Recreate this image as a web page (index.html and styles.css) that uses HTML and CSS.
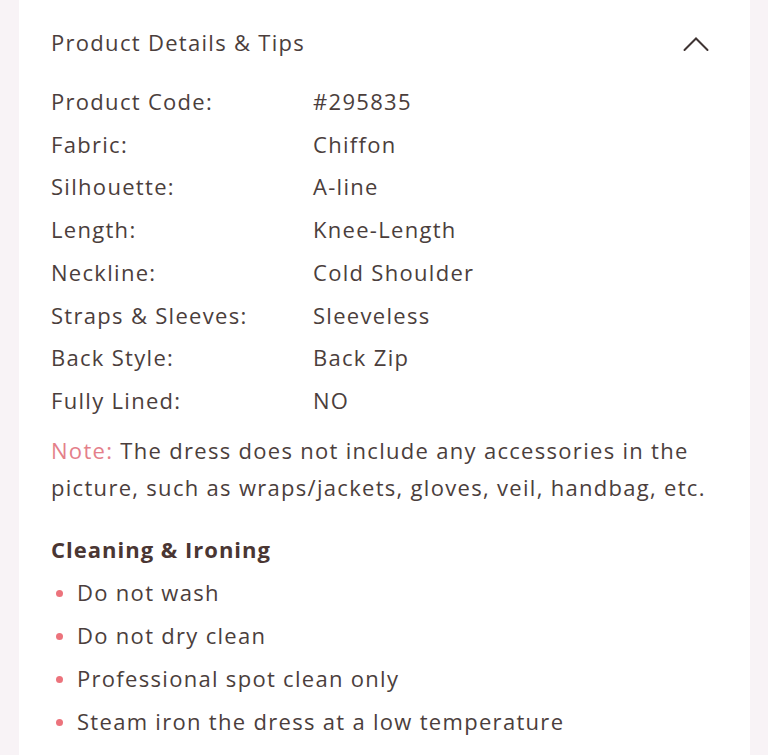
FILE: index.html
```html
<!DOCTYPE html>
<html lang="en">
<head>
<meta charset="utf-8">
<title>Product Details &amp; Tips</title>
<link rel="stylesheet" href="styles.css">
</head>
<body>
<main class="card">
  <div class="header">
    <h2 class="title">Product Details &amp; Tips</h2>
    <svg class="chevron" width="26" height="16" viewBox="0 0 26 16" aria-hidden="true">
      <polyline points="1.5,14 13,2.5 24.5,14" fill="none" stroke="#3f3433" stroke-width="2" stroke-linecap="round" stroke-linejoin="miter"/>
    </svg>
  </div>
  <dl class="specs">
    <div class="row"><dt>Product Code:</dt><dd>#295835</dd></div>
    <div class="row"><dt>Fabric:</dt><dd>Chiffon</dd></div>
    <div class="row"><dt>Silhouette:</dt><dd>A-line</dd></div>
    <div class="row"><dt>Length:</dt><dd>Knee-Length</dd></div>
    <div class="row"><dt>Neckline:</dt><dd>Cold Shoulder</dd></div>
    <div class="row"><dt>Straps &amp; Sleeves:</dt><dd>Sleeveless</dd></div>
    <div class="row"><dt>Back Style:</dt><dd>Back Zip</dd></div>
    <div class="row"><dt>Fully Lined:</dt><dd>NO</dd></div>
  </dl>
  <p class="note"><span class="note-label">Note: </span>The dress does not include any accessories in the picture, such as wraps/jackets, gloves, veil, handbag, etc.</p>
  <h3 class="subhead">Cleaning &amp; Ironing</h3>
  <ul class="tips">
    <li>Do not wash</li>
    <li>Do not dry clean</li>
    <li>Professional spot clean only</li>
    <li>Steam iron the dress at a low temperature</li>
  </ul>
</main>
</body>
</html>
```
FILE: styles.css
```css
html, body {
  margin: 0;
  padding: 0;
  background: #f8f3f6;
}
body {
  font-family: "Open Sans", "Lato", sans-serif;
  color: #4b3e3c;
  font-size: 22px;
  letter-spacing: 1.3px;
}
.card {
  background: #ffffff;
  margin: 0 18px 0 19px;
  padding: 0 32px 0 32px;
  height: 755px;
  overflow: hidden;
  box-sizing: border-box;
}
.header {
  display: flex;
  align-items: center;
  justify-content: space-between;
  padding: 21px 0 17px;
  height: 42px;
}
.title {
  margin: 0;
  font-size: 22px;
  font-weight: 400;
  line-height: 42px;
}
.chevron {
  margin-right: 9px;
  margin-top: 3px;
}
.specs {
  margin: 0;
}
.row {
  display: flex;
  line-height: 42.7px;
}
.row dt {
  width: 262px;
  flex: none;
}
.row dd {
  margin: 0;
}
.note {
  margin: 10px 0 0;
  line-height: 37px;
  max-width: 655px;
}
.note-label {
  color: #e4808a;
}
.subhead {
  margin: 25px 0 0;
  font-size: 22px;
  font-weight: 700;
  letter-spacing: 1px;
  line-height: 37px;
  color: #4a3633;
}
.tips {
  list-style: none;
  margin: 3px 0 0;
  padding: 0;
}
.tips li {
  display: flex;
  align-items: center;
  line-height: 43px;
}
.tips li::before {
  content: "";
  width: 7px;
  height: 7px;
  border-radius: 50%;
  background: #ec737c;
  margin: 2px 14px 0 5px;
  flex: none;
}
```
